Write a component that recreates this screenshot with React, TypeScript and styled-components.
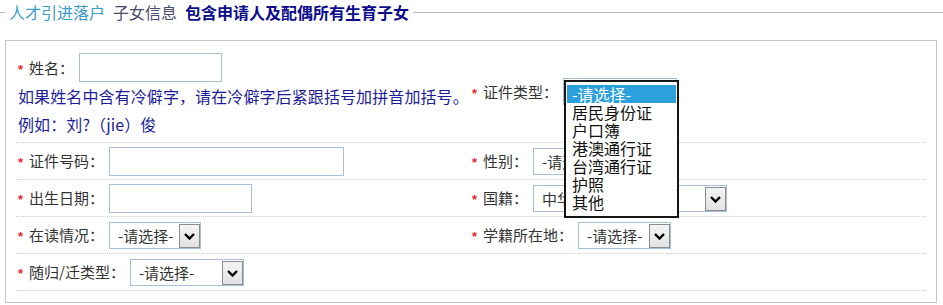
import React from "react";
import styled, { createGlobalStyle } from "styled-components";

const GlobalStyle = createGlobalStyle`
  html, body {
    margin: 0;
    padding: 0;
    background: #ffffff;
  }
  body {
    font-family: "Noto Sans CJK SC", "Liberation Sans", sans-serif;
    color: #333333;
  }
`;

export const Fieldset = styled.fieldset`
  margin: 0;
  padding: 0 6px 0 5px;
  border: 0;
  border-top: 1px solid #b8b8b8;
  min-inline-size: 0;
`;

export const Legend = styled.legend`
  padding: 0 4px;
  font-size: 16px;
  line-height: 24px;
  white-space: nowrap;
`;

const legendTones = {
  light: "color: #3b9dcc; font-weight: normal;",
  muted: "color: #4b4b6e; font-weight: normal;",
  strong: "color: #0b0b8c; font-weight: bold;",
};

export const LegendPart = styled.span<{ $tone: keyof typeof legendTones }>`
  margin-right: 8px;
  ${(p) => legendTones[p.$tone]}
  &:last-child {
    margin-right: 0;
  }
`;

export const Panel = styled.div`
  margin-top: 16px;
  border: 1px solid #c6c6c6;
  padding: 0 10px 11px;
`;

export const Row = styled.div<{ $tall?: boolean }>`
  display: flex;
  min-height: ${(p) => (p.$tall ? "101px" : "36px")};
  border-bottom: 1px dotted #cdcdcd;
`;

export const Cell = styled.div<{ $wide?: boolean }>`
  display: flex;
  align-items: center;
  box-sizing: border-box;
  width: ${(p) => (p.$wide ? "456px" : "454px")};
  padding-left: 2px;
`;

export const StackCell = styled.div`
  display: flex;
  flex-direction: column;
  box-sizing: border-box;
  width: 454px;
  padding: 12px 0 4px 2px;
`;

export const Line = styled.div`
  display: flex;
  align-items: center;
  height: 29px;
`;

export const Star = styled.span`
  display: inline-block;
  width: 11px;
  height: 20px;
  box-sizing: border-box;
  padding-top: 6px;
  color: #e8262b;
  font-family: "Liberation Sans", sans-serif;
  font-size: 13px;
  font-weight: bold;
  line-height: 12px;
`;

export const Label = styled.span`
  font-size: 15px;
  line-height: 20px;
  color: #333333;
  margin-right: 5px;
  white-space: nowrap;
`;

export const TextInput = styled.input<{ $w: number }>`
  box-sizing: border-box;
  width: ${(p) => p.$w}px;
  height: 29px;
  margin: 0;
  padding: 0 4px;
  border: 1px solid #a7bfdb;
  background: #ffffff;
  font: inherit;
  font-size: 15px;
  outline: none;
`;

export const Hint = styled.div`
  font-size: 16px;
  line-height: 28px;
  letter-spacing: 0.1px;
  color: #1c1c9a;
  white-space: nowrap;
`;

export const SelectBox = styled.div<{ $w: number }>`
  display: flex;
  align-items: center;
  box-sizing: border-box;
  width: ${(p) => p.$w}px;
  height: 27px;
  border: 1px solid #a7bfdb;
  background: #ffffff;
  padding-left: 8px;
  overflow: hidden;
`;

export const SelectValue = styled.span`
  flex: 1;
  font-size: 15px;
  color: #333333;
  white-space: nowrap;
  overflow: hidden;
`;

export const ArrowButton = styled.span`
  display: flex;
  align-items: center;
  justify-content: center;
  box-sizing: border-box;
  flex: 0 0 21px;
  height: 24px;
  margin-top: 2px;
  border: 1px solid #8d8d8d;
  background: linear-gradient(#f4f4f4, #e2e2e2);
`;

export const SelectAnchor = styled.div`
  position: relative;
`;

export const DropList = styled.ul`
  position: absolute;
  top: 2px;
  left: 1px;
  z-index: 2;
  box-sizing: border-box;
  width: 115px;
  margin: 0;
  padding: 3px 1px 5px;
  list-style: none;
  border: 2px solid #161616;
  background: #ffffff;
`;

export const DropItem = styled.li<{ $active?: boolean }>`
  height: 18px;
  padding-left: 5px;
  font-size: 16px;
  line-height: 18px;
  white-space: nowrap;
  color: ${(p) => (p.$active ? "#ffffff" : "#111111")};
  background: ${(p) => (p.$active ? "#2ba0dc" : "transparent")};
`;

function Chevron() {
  return (
    <svg width="11" height="7" viewBox="0 0 11 7">
      <polyline
        points="1,1 5.5,5.5 10,1"
        fill="none"
        stroke="#000"
        strokeWidth="2.4"
        strokeLinejoin="miter"
      />
    </svg>
  );
}

function FakeSelect({ w, value }: { w: number; value: string }) {
  return (
    <SelectBox $w={w}>
      <SelectValue>{value}</SelectValue>
      <ArrowButton>
        <Chevron />
      </ArrowButton>
    </SelectBox>
  );
}

const idTypes = ["-请选择-", "居民身份证", "户口簿", "港澳通行证", "台湾通行证", "护照", "其他"];

function App() {
  return (
    <>
      <GlobalStyle />
      <Fieldset>
        <Legend>
          <LegendPart $tone="light">人才引进落户</LegendPart>
          <LegendPart $tone="muted">子女信息</LegendPart>
          <LegendPart $tone="strong">包含申请人及配偶所有生育子女</LegendPart>
        </Legend>
        <Panel>
          <Row $tall>
            <StackCell>
              <Line>
                <Star>*</Star>
                <Label>姓名：</Label>
                <TextInput $w={143} />
              </Line>
              <Hint>如果姓名中含有冷僻字，请在冷僻字后紧跟括号加拼音加括号。</Hint>
              <Hint>例如：刘?（jie）俊</Hint>
            </StackCell>
            <Cell $wide>
              <Star>*</Star>
              <Label>证件类型：</Label>
              <SelectAnchor>
                <FakeSelect w={114} value="-请选择-" />
                <DropList>
                  {idTypes.map((t, i) => (
                    <DropItem key={t} $active={i === 0}>
                      {t}
                    </DropItem>
                  ))}
                </DropList>
              </SelectAnchor>
            </Cell>
          </Row>
          <Row>
            <Cell>
              <Star>*</Star>
              <Label>证件号码：</Label>
              <TextInput $w={235} />
            </Cell>
            <Cell $wide>
              <Star>*</Star>
              <Label>性别：</Label>
              <FakeSelect w={93} value="-请选择-" />
            </Cell>
          </Row>
          <Row>
            <Cell>
              <Star>*</Star>
              <Label>出生日期：</Label>
              <TextInput $w={143} />
            </Cell>
            <Cell $wide>
              <Star>*</Star>
              <Label>国籍：</Label>
              <FakeSelect w={194} value="中华人民共和国" />
            </Cell>
          </Row>
          <Row>
            <Cell>
              <Star>*</Star>
              <Label>在读情况：</Label>
              <FakeSelect w={92} value="-请选择-" />
            </Cell>
            <Cell $wide>
              <Star>*</Star>
              <Label>学籍所在地：</Label>
              <FakeSelect w={93} value="-请选择-" />
            </Cell>
          </Row>
          <Row>
            <Cell>
              <Star>*</Star>
              <Label>随归/迁类型：</Label>
              <FakeSelect w={114} value="-请选择-" />
            </Cell>
            <Cell $wide />
          </Row>
        </Panel>
      </Fieldset>
    </>
  );
}

export default App;
